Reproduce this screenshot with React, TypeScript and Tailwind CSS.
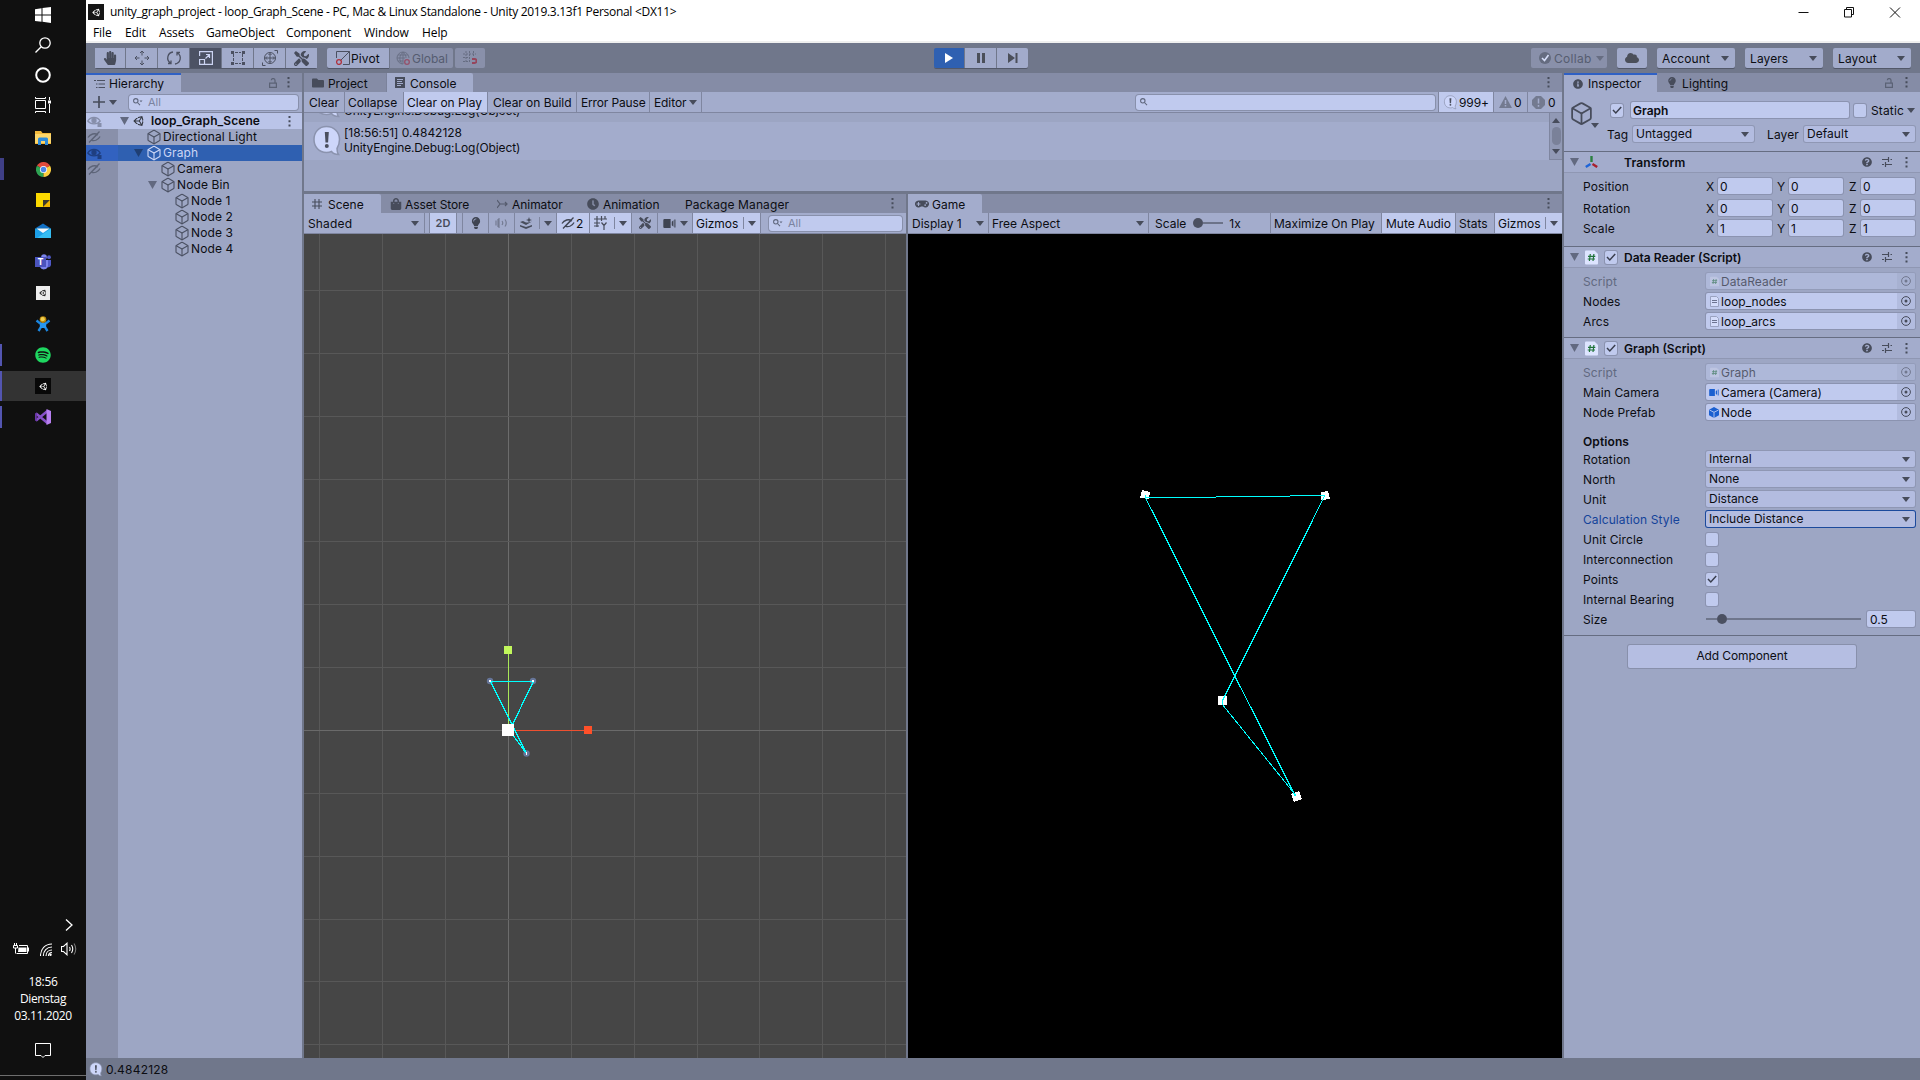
import React from "react";
import {
  FaUnity, FaHandPaper, FaTools, FaCloud, FaLightbulb, FaFolder, FaShoppingBag, FaClock,
  FaGamepad, FaInfoCircle, FaQuestionCircle, FaSpotify,
} from "react-icons/fa";
import { Box } from "lucide-react";

type Kids = { children?: React.ReactNode; className?: string };

/* ---------- small shared glyphs ---------- */
const Down = ({ className = "" }: { className?: string }) => (
  <svg className={`h-[5px] w-[8px] shrink-0 fill-[#474c5b] ${className}`} viewBox="0 0 8 5"><path d="M0 0h8L4 5z" /></svg>
);
const Fold = ({ className = "", color = "fill-[#626980]" }: { className?: string; color?: string }) => (
  <svg className={`h-[8px] w-[9px] shrink-0 ${color} ${className}`} viewBox="0 0 9 8"><path d="M0 0h9L4.500 8z" /></svg>
);
const Dots = ({ className = "" }: { className?: string }) => (
  <svg className={`h-[11px] w-[3px] shrink-0 fill-[#474c5b] ${className}`} viewBox="0 0 3 11"><path d="M.5 0h2v2h-2zM.5 4.300h2v2h-2zM.5 8.600h2v2h-2z" /></svg>
);
const Lock = ({ className = "" }: { className?: string }) => (
  <svg className={`h-[10px] w-[8px] shrink-0 ${className}`} viewBox="0 0 8 10" fill="none" stroke="#5b6275" strokeWidth="1.200">
    <path d="M.6 5.100h6.800v4.300H.6zM6 5V2.500A1.800 1.800 0 0 0 2.300 2.300" />
  </svg>
);
const Search = ({ menu, className = "" }: { menu?: boolean; className?: string }) => (
  <svg className={`h-[8px] w-[10px] shrink-0 ${className}`} viewBox="0 0 10 8" fill="none" stroke="#5f677d" strokeWidth="1.100">
    <circle cx="2.800" cy="2.800" r="2.200" /><path d="M4.500 4.500L7 7.200" />
    {menu && <path d="M6.500 2.500h3L8 4.200z" fill="#5f677d" stroke="none" />}
  </svg>
);
const Check = () => (
  <svg className="h-[10px] w-[10px]" viewBox="0 0 10 10" fill="none" stroke="#3a3f4e" strokeWidth="1.500"><path d="M1 5l2.800 3L9.200 2" /></svg>
);
const Cube = ({ size = "h-[16px] w-[16px]", className = "text-[#4c5264]" }: { size?: string; className?: string }) => <Box className={`${size} shrink-0 ${className}`} strokeWidth={1.7} />;
const Bubble = ({ className = "" }: { className?: string }) => (
  <svg className={`shrink-0 ${className}`} viewBox="0 0 30 32">
    <path d="M14.500 1.500C7 1.500 2 7 2 14.500S7 27.500 14.500 27.500c2 0 3.500-.3 5-1 1.500 2 4 3 7 3-1.500-2-1.500-4-1.500-6 1.500-2.500 2.500-5.500 2.500-9C27.500 7 22 1.500 14.500 1.500z" fill="#cdd6fa" stroke="#8b93ae" strokeWidth="1.500" />
    <path d="M12.800 7h4l-.7 10.500h-2.600z" fill="#4a4f5e" /><circle cx="14.800" cy="21" r="2" fill="#4a4f5e" />
  </svg>
);
const Grid = () => (
  <svg className="h-[10px] w-[10px] shrink-0" viewBox="0 0 10 10" fill="none" stroke="#474c5b" strokeWidth="1.100"><path d="M3 0v10M7 0v10M0 3h10M0 7h10" /></svg>
);
const Camera = ({ size = "h-[8px] w-[11px]", color = "fill-[#3f4452]" }: { size?: string; color?: string }) => (
  <svg className={`shrink-0 ${size} ${color}`} viewBox="0 0 11 8"><path d="M0 1a1 1 0 0 1 1-1h5.500v8H1a1 1 0 0 1-1-1zM7.500 2.500L9 1.200v5.600L7.500 5.500zM9.800.5h1v7h-1z" /></svg>
);
const EyeOff = ({ className = "" }: { className?: string }) => (
  <svg className={`h-[12px] w-[14px] shrink-0 ${className}`} viewBox="0 0 14 12" fill="none" stroke="currentColor" strokeWidth="1.300">
    <path d="M1 6.500C3 3 8 1.500 11 4M13 5.500C11 9.500 7 10.300 4.500 9.200M2 11.500L12.500.5M5.500 8l4-4" />
  </svg>
);
const Eye = ({ className = "" }: { className?: string }) => (
  <svg className={`h-[12px] w-[15px] shrink-0 ${className}`} viewBox="0 0 15 12" fill="none" stroke="currentColor" strokeWidth="1.300">
    <path d="M.8 6C3.500 1.300 10.500 1.300 13.200 6 10.500 9.700 3.500 9.700.8 6z" /><circle cx="7" cy="5.500" r="2" fill="currentColor" /><path d="M10.500 8h4v4h-4z" fill="currentColor" stroke="none" />
  </svg>
);

/* ---------- Windows task bar ---------- */
const TaskItem = ({ children, mark, className = "h-[30px] mb-px" }: Kids & { mark?: string }) => (
  <div className={`flex w-full items-center ${className}`}>
    <div className={`shrink-0 ${mark ?? "w-0"}`} />
    <div className="flex flex-1 justify-center">{children}</div>
    <div className={`shrink-0 ${mark ? (mark.includes("w-[4px]") ? "w-[4px]" : "w-[2px]") : "w-0"}`} />
  </div>
);

const TaskBar = () => (
  <aside className="flex h-full w-[86px] shrink-0 flex-col bg-[#101010] text-white">
    <TaskItem className="h-[30px]">
      <svg className="h-4 w-4 fill-white" viewBox="0 0 16 16"><path d="M0 2.300l6.500-1v6.300H0zM7.500 1.100L16 0v7.600H7.500zM0 8.500h6.500v6.300L0 13.900zM7.500 8.500H16V16l-8.500-1.200z" /></svg>
    </TaskItem>
    <TaskItem className="h-[30px]">
      <svg className="h-4 w-4" viewBox="0 0 16 16" fill="none" stroke="#fff" strokeWidth="1.300"><circle cx="10" cy="6" r="5.200" /><path d="M6.200 9.800L.5 15.500" /></svg>
    </TaskItem>
    <TaskItem className="h-[30px]">
      <svg className="h-4 w-4" viewBox="0 0 16 16" fill="none" stroke="#fff" strokeWidth="2"><circle cx="8" cy="8" r="6.800" /></svg>
    </TaskItem>
    <TaskItem className="h-[30px] mb-[3px]">
      <svg className="h-4 w-4" viewBox="0 0 16 16" fill="none" stroke="#fff"><path d="M.5 3.500h10v8H.5zM.5 0v1.500h10V0M.5 16v-1.500h10V16M14.500 0v3M14.500 7v9" /><path d="M13 3.500h3v3h-3z" fill="#fff" stroke="none" /></svg>
    </TaskItem>
    <TaskItem>
      <svg className="h-4 w-4" viewBox="0 0 16 16"><path d="M0 1h6l1.500 2H16v11H0z" fill="#f2b93c" /><path d="M0 4h16v9H0z" fill="#fcd66b" /><path d="M3 15V9q0-1.500 1.500-1.500h7Q13 7.500 13 9v6h-3v-4H6v4z" fill="#2d8bdc" /></svg>
    </TaskItem>
    <TaskItem mark="h-[22px] w-[4px] bg-[#3f3f86]">
      <svg className="h-[15px] w-[15px]" viewBox="0 0 16 16">
        <path d="M8 8L1.070 4A8 8 0 0 1 14.930 4z" fill="#e04a3c" /><path d="M8 8V16A8 8 0 0 1 1.070 4z" fill="#2ea353" /><path d="M8 8L14.930 4A8 8 0 0 1 8 16z" fill="#fbcf3f" /><circle cx="8" cy="8" r="3.800" fill="#fff" /><circle cx="8" cy="8" r="3" fill="#4b86e8" />
      </svg>
    </TaskItem>
    <TaskItem>
      <svg className="h-[14px] w-[14px]" viewBox="0 0 14 14"><path d="M0 0h14v7l-7 7H0z" fill="#fcd900" /><path d="M7 7h7l-7 7z" fill="#3b3a30" /><path d="M14 7v7H7z" fill="#f0b400" /></svg>
    </TaskItem>
    <TaskItem>
      <svg className="h-4 w-4" viewBox="0 0 16 16"><path d="M0 5.500L8 .5l8 5z" fill="#1270c4" /><path d="M0 5.500h16V15H0z" fill="#1c9fe8" /><path d="M16 5.500V15H2z" fill="#35bdf2" /><path d="M1.500 5.500h13L8 10z" fill="#f4f8fb" /></svg>
    </TaskItem>
    <TaskItem>
      <div className="relative h-4 w-4">
        <svg className="h-4 w-4" viewBox="0 0 16 16"><circle cx="9" cy="3" r="2.800" fill="#7b83eb" /><circle cx="14" cy="3.200" r="1.900" fill="#5059c9" /><path d="M11 6h5v5a3 3 0 0 1-5 1.500z" fill="#5059c9" /><path d="M5 6h8v5.500a4.200 4.200 0 0 1-8 1.500z" fill="#7b83eb" /><path d="M0 3h11v10H0z" fill="#4b53bc" /></svg>
        <span className="absolute left-[2.500px] top-[3px] font-['Inter'] text-[9px] font-bold leading-[10px]">T</span>
      </div>
    </TaskItem>
    <TaskItem><div className="flex h-[14px] w-[14px] items-center justify-center bg-[#ededed]"><FaUnity className="h-[8px] w-[8px] text-[#222]" /></div></TaskItem>
    <TaskItem>
      <svg className="h-4 w-4" viewBox="0 0 16 16"><path d="M1.500 4.500L6 8v3l-2.500 4M14.500 4.500L10 8v3l2.500 4" fill="none" stroke="#1b86e0" strokeWidth="2.400" /><path d="M5 6.500h6V12H5z" fill="#2797f0" /><circle cx="8" cy="3.600" r="3.300" fill="#b8860b" /><circle cx="7.700" cy="3.200" r="2.100" fill="#f0cf50" /></svg>
    </TaskItem>
    <TaskItem mark="h-[22px] w-[2px] bg-[#5355b0]"><FaSpotify className="h-4 w-4 text-[#1ed760]" /></TaskItem>
    <TaskItem className="mb-px h-[30px] bg-[#333]" mark="h-[30px] w-[2px] bg-[#5355b0]"><div className="flex h-4 w-4 items-center justify-center bg-[#080808]"><FaUnity className="h-[9px] w-[9px]" /></div></TaskItem>
    <TaskItem mark="h-[22px] w-[2px] bg-[#5355b0]">
      <svg className="h-4 w-4" viewBox="0 0 16 16"><path d="M1 4.500L12.500 14M1 11.500L12.500 2" stroke="#8650c7" strokeWidth="2.600" fill="none" /><path d="M0 4.500l1.800-.9v8.800L0 11.500z" fill="#6a37a8" /><path d="M11.500 0L16 2v12l-4.500 2z" fill="#b77ff0" /></svg>
    </TaskItem>
    <div className="flex-1" />
    <svg className="ml-[65px] h-[12px] w-[8px]" viewBox="0 0 8 12" fill="none" stroke="#fff" strokeWidth="1.300"><path d="M1 .5l6 5.500-6 5.500" /></svg>
    <div className="mt-[10px] flex h-[16px] items-center">
      <svg className="ml-[13px] h-[12px] w-[16px]" viewBox="0 0 16 12" fill="none" stroke="#fff"><path d="M3.500 10.500h11v-8H6M.5 2.500h4v2.500h-4zM1.500 2.500V0M3.500 2.500V0M2.500 5v5.500M15.500 4.500v4" /><path d="M5.500 4.500h8v4.500H5z" fill="#fff" stroke="none" /></svg>
      <svg className="ml-[11px] h-[13px] w-[12px]" viewBox="0 0 12 13" fill="none" stroke="#fff" strokeWidth="1.100"><path d="M.5 13C.5 6 5 1 12 1M3.300 13c0-5 3.500-9 8.700-9M6 13c0-3.500 2.500-6 6-6M8.500 13c0-2 1.500-3.500 3.500-3.500" /><circle cx="10.500" cy="11.700" r="1.200" fill="#fff" stroke="none" /></svg>
      <svg className="ml-[9px] h-[14px] w-[17px]" viewBox="0 0 17 14" fill="none" stroke="#fff" strokeWidth="1.100"><path d="M.5 4.500h2L6 1.200v11.600L2.500 9.500h-2zM8.500 5q1.200 2 0 4M10.500 3q2.500 4 0 8" /><path d="M13 1.500q3.500 5.500 0 11" stroke="#777" /></svg>
    </div>
    <div className="mt-[16px] text-center font-['Open_Sans'] text-[12px] leading-[17px] tracking-[-0.35px]"><div>18:56</div><div>Dienstag</div><div>03.11.2020</div></div>
    <svg className="mx-auto mt-[19px] h-[16px] w-[16px]" viewBox="0 0 16 16" fill="none" stroke="#fff"><path d="M.5.500h15v12H10l-2 2-2-2H.5z" /></svg>
    <div className="mt-[16px] h-px w-full bg-[#6e6e6e]" />
    <div className="h-[4px]" />
  </aside>
);

/* ---------- title and menu ---------- */
const TitleBar = () => (
  <header className="h-[43px] shrink-0 border-b-2 border-[#efefef] bg-white font-['Open_Sans'] text-[12px] text-black">
    <div className="flex h-[24px] items-center">
      <div className="ml-[2px] flex h-4 w-4 items-center justify-center bg-[#161616]"><FaUnity className="h-[9px] w-[9px] text-white" /></div>
      <span className="ml-[6px] whitespace-pre tracking-[-0.29px]">unity_graph_project - loop_Graph_Scene - PC, Mac &amp; Linux Standalone - Unity 2019.3.13f1 Personal &lt;DX11&gt;</span>
      <svg className="ml-auto mr-[19px] h-[14px] w-[104px]" viewBox="0 0 104 14" fill="none" stroke="#111"><path d="M1.500 7.500h10M47.500 4.500h7V12h-7zM49.500 4.500V2.500h7v7h-2M93 2.500l10 10M103 2.500l-10 10" /></svg>
    </div>
    <nav className="flex h-[17px] items-center leading-[17px] tracking-[-0.1px]">
      <span className="ml-[7px] w-[32px]">File</span><span className="w-[34px]">Edit</span><span className="w-[47px]">Assets</span><span className="w-[80px]">GameObject</span><span className="w-[78px]">Component</span><span className="w-[58px]">Window</span><span>Help</span>
    </nav>
  </header>
);

/* ---------- main toolbar ---------- */
const Tool = ({ children, size = "w-[31px] mr-px", className = "bg-[#a2abcb]" }: Kids & { size?: string }) => (
  <div className={`flex h-[20px] items-center justify-center ${size} ${className}`}>{children}</div>
);
const TopDrop = ({ children, gap = "mr-[10px]" }: Kids & { gap?: string }) => (
  <div className={`flex h-[20px] w-[78px] items-center justify-between rounded-[2px] bg-[#a2abcb] pl-[5px] pr-[6px] shadow-[0_1px_0_#525869] ${gap}`}><span className="pt-px tracking-[0.1px]">{children}</span><Down /></div>
);
const ico = "h-[16px] w-[16px] fill-none stroke-[#4b5061]";
const MainBar = () => (
  <div className="flex h-[30px] shrink-0 items-center bg-[#70778b]">
    <div className="ml-[9px] flex rounded-[2px] shadow-[0_1px_0_#525869]">
      <Tool size="w-[30px] mr-px"><FaHandPaper className="h-[14px] w-[14px] text-[#474c5b]" /></Tool>
      <Tool><svg className={ico} viewBox="0 0 16 16"><path d="M8 1v4.500M8 10.500V15M1 8h4.500M10.500 8H15M6 3l2-2 2 2M6 13l2 2 2-2M3 6L1 8l2 2M13 6l2 2-2 2" /></svg></Tool>
      <Tool><svg className={ico} viewBox="0 0 16 16" strokeWidth="1.300"><path d="M7 2A6 6 0 0 0 4.500 13M2 13.500h3v-3M9 14A6 6 0 0 0 11.500 3M14 2.500h-3v3" /></svg></Tool>
      <Tool className="bg-[#4c5264]"><svg className="h-[14px] w-[14px] fill-none stroke-[#ccd4f2]" viewBox="0 0 14 14" strokeWidth="1.200"><path d="M.6 5V.6h12.800v12.800H6M.6 8.500h4.900v4.900H.6zM6.500 7.500L10 4M7 3.500h3.500V7" /></svg></Tool>
      <Tool><svg className={ico} viewBox="0 0 16 16"><path d="M3.500 4v8M12.500 4v8M5 2.500h6M5 13.500h6" strokeDasharray="3 1" /><path d="M1 1h3v3H1zM12 1h3v3h-3zM1 12h3v3H1zM12 12h3v3h-3z" className="fill-[#4b5061] stroke-none" /></svg></Tool>
      <Tool><svg className={ico} viewBox="0 0 16 16"><circle cx="8" cy="8" r="5.500" /><path d="M8 3.500v9M3.500 8h9M6.500 5L8 3.500 9.500 5M6.500 11L8 12.500 9.500 11M5 6.500L3.500 8 5 9.500M11 6.500L12.500 8 11 9.500M12.500.5h3v3M.5 12.500v3h3" /></svg></Tool>
      <Tool size="w-[31px]"><FaTools className="h-[15px] w-[15px] text-[#474c5b]" /></Tool>
    </div>
    <div className="ml-[10px] flex h-[20px] w-[62px] items-center rounded-l-[2px] bg-[#a2abcb] shadow-[0_1px_0_#525869]">
      <svg className="ml-[9px] h-[14px] w-[14px] fill-none" viewBox="0 0 14 14"><path d="M.5 7V.5h13v13H7M4.500 9.500L13.500.5" stroke="#4b5061" /><circle cx="3" cy="11" r="2.400" stroke="#b0303c" strokeWidth="1.300" /></svg>
      <span className="ml-px pt-px tracking-[0.1px]">Pivot</span>
    </div>
    <div className="ml-px flex h-[20px] w-[63px] items-center rounded-r-[2px] bg-[#8990aa] text-[#555c70]">
      <svg className="ml-[6px] h-[14px] w-[14px] fill-none" viewBox="0 0 14 14"><path d="M7 13A6 6 0 1 1 13 7M1 7h8M7 1v12M7 1C3 5 3 9 6 13M7 1c2 2 3 4 3 6M2 4h10M2 10h5" stroke="#6a7186" /><circle cx="11" cy="11" r="2.300" stroke="#96516a" strokeWidth="1.300" /></svg>
      <span className="ml-[2px] pt-px tracking-[-0.05px]">Global</span>
    </div>
    <div className="ml-[2px] flex h-[20px] w-[30px] items-center justify-center rounded-[2px] bg-[#8990aa]">
      <svg className="h-[14px] w-[14px] fill-none" viewBox="0 0 14 14"><path d="M3 0v12M6.500 0v12M10.500 0v5M0 3h13M0 6.500h7M0 10.500h7" stroke="#666d82" strokeDasharray="2 1" /><path d="M9 8h2.500a2 2 0 0 1 0 4H9" stroke="#96455c" strokeWidth="1.800" /></svg>
    </div>
    <div className="ml-[449px] flex h-[20px] items-center rounded-[2px] shadow-[0_1px_0_#525869]">
      <Tool size="w-[30px] mr-px" className="rounded-l-[2px] bg-[#2f60b1]"><svg className="h-[10px] w-[8px] fill-white" viewBox="0 0 8 10"><path d="M0 0l8 5-8 5z" /></svg></Tool>
      <Tool><svg className="h-[10px] w-[8px] fill-[#4b4f5a]" viewBox="0 0 8 10"><path d="M0 0h3v10H0zM5 0h3v10H5z" /></svg></Tool>
      <Tool size="w-[31px]" className="rounded-r-[2px] bg-[#a2abcb]"><svg className="h-[10px] w-[10px] fill-[#4b4f5a]" viewBox="0 0 10 10"><path d="M0 0l7 5-7 5zM7.500 0h2v10h-2z" /></svg></Tool>
    </div>
    <div className="flex-1" />
    <div className="mr-[10px] flex h-[20px] w-[76px] items-center rounded-[2px] bg-[#8990aa] pl-[8px] text-[#565d70]">
      <svg className="h-[12px] w-[12px]" viewBox="0 0 12 12"><circle cx="6" cy="6" r="6" fill="#656c80" /><path d="M3 6l2.500 2.500L9.500 3" fill="none" stroke="#d6def8" strokeWidth="1.600" /></svg>
      <span className="ml-[3px] pt-px tracking-[0.3px]">Collab</span><Down className="ml-[4px] opacity-50" />
    </div>
    <div className="mr-[10px] flex h-[20px] w-[30px] items-center justify-center rounded-[2px] bg-[#a2abcb] shadow-[0_1px_0_#525869]"><FaCloud className="h-[14px] w-[14px] text-[#4b4f5a]" /></div>
    <TopDrop>Account</TopDrop><TopDrop>Layers</TopDrop><TopDrop gap="mr-[9px]">Layout</TopDrop>
  </div>
);

/* ---------- hierarchy ---------- */
const rows = [
  { name: "Directional Light", pad: "pl-[28px]", off: true },
  { name: "Graph", pad: "pl-[16px]", open: true, sel: true },
  { name: "Camera", pad: "pl-[42px]", off: true },
  { name: "Node Bin", pad: "pl-[30px]", open: true },
  { name: "Node 1", pad: "pl-[56px]" }, { name: "Node 2", pad: "pl-[56px]" }, { name: "Node 3", pad: "pl-[56px]" }, { name: "Node 4", pad: "pl-[56px]" },
];
const Hierarchy = () => (
  <section className="flex w-[216px] shrink-0 flex-col bg-[#9da6c4]">
    <div className="flex h-[19px] items-center bg-[#858ca6]">
      <div className="flex h-full w-[95px] items-center border-t-2 border-[#2f60c4] bg-[#a3accc]">
        <svg className="ml-[8px] h-[10px] w-[11px] fill-none stroke-[#4b5061]" viewBox="0 0 11 10"><path d="M0 1.500h2M3 1.500h8M2 5h1.500M4.500 5H11M2 8.500h1.500M4.500 8.500H11" /></svg>
        <span className="ml-[4px] tracking-[0.02px]">Hierarchy</span>
      </div>
      <Lock className="ml-[88px]" /><Dots className="ml-[10px]" />
    </div>
    <div className="flex h-[21px] items-center border-b border-[#7f86a0] bg-[#a3accc]">
      <svg className="ml-[7px] h-[12px] w-[12px] stroke-[#474c5b]" viewBox="0 0 12 12" strokeWidth="1.700"><path d="M6 0v12M0 6h12" /></svg>
      <Down className="ml-[4px]" />
      <div className="ml-[12px] flex h-[15px] w-[169px] items-center rounded-[3px] bg-[#c0caee] shadow-[0_0_0_1px_#8890ab]"><Search menu className="ml-[4px]" /><span className="ml-[5px] text-[11px] text-[#7b83a0]">All</span></div>
    </div>
    <div className="flex h-[16px] shrink-0 items-center bg-[#bac4e8] font-semibold">
      <Eye className="ml-px text-[#868eaa]" /><Fold className="ml-[18px]" /><FaUnity className="ml-[4px] h-[12px] w-[12px] text-[#33363f]" />
      <span className="ml-[6px] tracking-[0.08px]">loop_Graph_Scene</span><Dots className="ml-auto mr-[11px]" />
    </div>
    {rows.map((r) => (
      <div key={r.name} className={`flex h-[16px] shrink-0 items-center ${r.sel ? "bg-[#2f60b1] text-[#ccd6f5]" : ""}`}>
        <div className={`flex h-full w-[32px] items-center ${r.sel ? "bg-[#3262c0]" : "bg-[#8990aa]"}`}>
          {r.off && <EyeOff className="ml-px text-[#5d6478]" />}{r.sel && <Eye className="ml-px text-[#1f3f80]" />}
        </div>
        <div className={`flex items-center ${r.pad}`}>
          {r.open && <Fold className="mr-[3px]" color={r.sel ? "fill-[#1f3f74]" : "fill-[#626980]"} />}
          <Cube className={r.sel ? "text-[#ccd6f5]" : "text-[#4c5264]"} /><span className="ml-px whitespace-nowrap tracking-[0.12px]">{r.name}</span>
        </div>
      </div>
    ))}
    <div className="w-[32px] flex-1 bg-[#8990aa]" />
  </section>
);

/* ---------- centre panels ---------- */
const Bar = ({ children }: Kids) => <div className="flex h-[21px] shrink-0 items-stretch border-b border-[#7f86a0] bg-[#a3accc]">{children}</div>;
const Seg = ({ children, className = "" }: Kids) => <div className={`flex shrink-0 items-center whitespace-nowrap border-r border-[#7f86a0] ${className}`}>{children}</div>;
const Tabs = ({ children }: Kids) => <div className="flex h-[19px] shrink-0 items-center bg-[#858ca6]">{children}</div>;
const Split = () => <div className="ml-auto mr-[4px] h-[12px] w-px bg-[#7f86a0]" />;
/* Label whose baseline sits one pixel below the optical centre of its bar. */
const L = ({ children, className = "" }: Kids) => <span className={`shrink-0 pt-[2px] leading-[18px] ${className}`}>{children}</span>;

const Console = () => (
  <section className="flex h-[118px] shrink-0 flex-col bg-[#9ca5c3]">
    <Tabs>
      <div className="flex h-full w-[83px] items-center border-r border-[#7b829b]"><FaFolder className="ml-[8px] h-[12px] w-[12px] text-[#474c5b]" /><L className="ml-[4px] tracking-[-0.05px]">Project</L></div>
      <div className="flex h-full w-[86px] items-center rounded-tr-[2px] bg-[#a3accc]">
        <svg className="ml-[8px] h-[11px] w-[10px]" viewBox="0 0 10 11"><path d="M0 0h10v11H0z" fill="#474c5b" /><path d="M2 2.500h6M2 4.500h5M2 6.500h6M2 8.500h4" stroke="#a3accc" /></svg><L className="ml-[5px]">Console</L>
      </div>
      <Dots className="ml-auto mr-[12px]" />
    </Tabs>
    <Bar>
      <Seg className="w-[41px] pl-[5px]"><L>Clear</L></Seg><Seg className="w-[59px] pl-[3px]"><L>Collapse</L></Seg><Seg className="w-[84px] bg-[#c0caee] pl-[3px]"><L>Clear on Play</L></Seg>
      <Seg className="w-[89px] pl-[5px]"><L className="tracking-[-0.05px]">Clear on Build</L></Seg><Seg className="w-[73px] pl-[4px]"><L className="tracking-[-0.15px]">Error Pause</L></Seg><Seg className="w-[52px] pl-[4px]"><L className="tracking-[-0.1px]">Editor</L><Down className="ml-[3px]" /></Seg>
      <div className="ml-auto flex items-center border-r border-[#7f86a0] pr-[3px]"><div className="flex h-[15px] w-[299px] items-center rounded-[3px] bg-[#c0caee] shadow-[0_0_0_1px_#8890ab]"><Search className="ml-[4px]" /></div></div>
      <Seg className="w-[55px] bg-[#c0caee]"><Bubble className="ml-[4px] h-[15px] w-[15px]" /><L className="ml-px tracking-[-0.1px]">999+</L></Seg>
      <Seg className="w-[34px]"><svg className="ml-[5px] h-[12px] w-[13px]" viewBox="0 0 13 12"><path d="M6.500 0L13 12H0z" fill="#737a90" /><path d="M6.500 4v4M6.500 9v1.500" stroke="#a3accc" strokeWidth="1.500" /></svg><L className="ml-[2px]">0</L></Seg>
      <div className="flex w-[34px] items-center"><svg className="ml-[4px] h-[13px] w-[13px]" viewBox="0 0 13 13"><path d="M4 0h5l4 4v5l-4 4H4L0 9V4z" fill="#737a90" /><path d="M6.500 2.500v5M6.500 9v1.700" stroke="#a3accc" strokeWidth="1.500" /></svg><L className="ml-[3px]">0</L></div>
    </Bar>
    <div className="flex h-[47px] shrink-0">
      <div className="flex flex-1 flex-col overflow-hidden">
        <div className="flex h-[9px] items-end overflow-hidden"><Bubble className="mb-[3px] ml-[8px] h-[32px] w-[30px]" /><span className="mb-[5px] ml-[2px] shrink-0 leading-[12px] tracking-[-0.14px]">UnityEngine.Debug:Log(Object)</span></div>
        <div className="flex h-[38px] items-center bg-[#a3accc]"><Bubble className="ml-[8px] h-[32px] w-[30px]" /><div className="ml-[2px] pb-[2px] leading-[15px] tracking-[-0.14px]"><div className="tracking-[-0.05px]">[18:56:51] 0.4842128</div><div>UnityEngine.Debug:Log(Object)</div></div></div>
      </div>
      <div className="flex w-[13px] flex-col items-center justify-between border-b border-l border-[#7f86a0] bg-[#9199b5] py-[5px]"><Down className="rotate-180" /><div className="h-[18px] w-[9px] rounded-full bg-[#7a8199]" /><Down /></div>
    </div>
  </section>
);

const vLines = [319, 382, 445, 508, 571, 634, 697, 759, 822, 885];
const hLines = [290, 353, 416, 479, 541, 604, 667, 730, 793, 856, 919, 981, 1044];

const SceneView = () => (
  <section className="flex w-[602px] shrink-0 flex-col">
    <Tabs>
      <div className="flex h-full w-[77px] items-center rounded-tr-[2px] bg-[#a3accc]"><div className="ml-[8px]"><Grid /></div><L className="ml-[6px]">Scene</L></div>
      <FaShoppingBag className="ml-[9px] h-[12px] w-[12px] text-[#474c5b]" /><L className="ml-[3px] w-[92px] tracking-[-0.1px]">Asset Store</L>
      <svg className="h-[10px] w-[11px] fill-none stroke-[#555b6d]" viewBox="0 0 11 10" strokeWidth="1.200"><path d="M0 1l3 4-3 4M3 5h7M8 3l2 2-2 2" /></svg><L className="ml-[4px] w-[75px] tracking-[-0.05px]">Animator</L>
      <FaClock className="h-[12px] w-[12px] text-[#474c5b]" /><L className="ml-[4px] w-[82px]">Animation</L>
      <L className="tracking-[0.1px]">Package Manager</L><Dots className="ml-auto mr-[12px]" />
    </Tabs>
    <Bar>
      <Seg className="w-[121px] justify-between pl-[4px] pr-[5px]"><L className="tracking-[0.15px]">Shaded</L><Down /></Seg>
      <Seg className="w-[5px]" />
      <Seg className="w-[27px] justify-center bg-[#c0caee] text-[11px] font-semibold text-[#474c5b]"><span className="pt-px">2D</span></Seg>
      <Seg className="w-[6px]" />
      <Seg className="w-[26px] justify-center"><FaLightbulb className="h-[12px] w-[10px] text-[#3f4452]" /></Seg>
      <Seg className="w-[26px] justify-center"><svg className="h-[10px] w-[13px] fill-none stroke-[#747b92]" viewBox="0 0 13 10" strokeWidth="1.200"><path d="M1 2.500v5M4 0v10M3 1v8" /><path d="M7 3q1.500 2 0 4M10 1.500q2.500 3.500 0 7" /></svg></Seg>
      <Seg className="w-[42px] pl-[5px] pr-[4px]"><svg className="h-[12px] w-[13px] fill-[#474c5b]" viewBox="0 0 13 12"><path d="M0 5l3-1 3 1.500h3l3-1L6 8zM0 8l6 2 6-2v1.500L6 12 0 9.500zM9 0l.8 2.200L12 3l-2.200.8L9 6l-.8-2.200L6 3l2.200-.8z" /></svg><Split /><Down /></Seg>
      <Seg className="w-[33px] bg-[#c0caee] pl-[4px]"><EyeOff className="text-[#3f4452]" /><L className="ml-px">2</L></Seg>
      <Seg className="w-[42px] bg-[#c0caee] pl-[4px] pr-[4px]"><svg className="h-[14px] w-[13px] fill-none stroke-[#474c5b]" viewBox="0 0 13 14" strokeWidth="1.200"><path d="M3 0v11M7.500 0v5M11 0v3M0 3h13M0 7h6M0 10h5M7.500 6.500L10 9.500l2.500-3M10 9.500V14" /></svg><Split /><Down /></Seg>
      <Seg className="w-[26px] justify-center"><FaTools className="h-[12px] w-[12px] text-[#474c5b]" /></Seg>
      <Seg className="w-[35px] pl-[5px] pr-[4px]"><Camera size="h-[9px] w-[13px]" /><Down className="ml-auto" /></Seg>
      <Seg className="w-[68px] bg-[#c0caee] pl-[3px] pr-[4px]"><L className="tracking-[-0.05px]">Gizmos</L><Split /><Down /></Seg>
      <div className="flex items-center"><div className="ml-[8px] flex h-[15px] w-[133px] items-center rounded-[3px] bg-[#c0caee] shadow-[0_0_0_1px_#8890ab]"><Search menu className="ml-[4px]" /><span className="ml-[5px] text-[11px] text-[#7b83a0]">All</span></div></div>
    </Bar>
    <svg className="h-[824px] w-[602px] bg-[#464646]" viewBox="304 234 602 824" shapeRendering="crispEdges" fill="none">
      {vLines.map((x) => <path key={x} d={`M${x + 0.5} 234V1058`} stroke={x === 508 ? "#6c6c6c" : "#585858"} />)}
      {hLines.map((y) => <path key={y} d={`M304 ${y + 0.5}H906`} stroke={y === 730 ? "#6a6a6a" : "#585858"} />)}
      <path d="M508.500 654V724" stroke="#a9e858" /><path d="M514 730.500H584" stroke="#ee5030" />
      <g shapeRendering="auto" fill="#8fb0ff" opacity=".45"><circle cx="490" cy="681" r="3.200" /><circle cx="533" cy="681" r="3.200" /><circle cx="526.500" cy="753.500" r="3.200" /></g>
      <path d="M490 681.500H533.500" stroke="#00ffff" />
      <path d="M490.500 681.500L526.500 753.500M533.500 681.500L509.500 730.500L526.500 753.500" stroke="#00ffff" strokeWidth="1.300" />
      <path d="M489 680h2v2h-2zM532 680h2v2h-2zM526 752h1v3h-1z" fill="#fff" />
      <path d="M504 646h8v8h-8z" fill="#c2f75c" /><path d="M584 726h8v8h-8z" fill="#ff5029" /><path d="M502 724h12v12h-12z" fill="#fff" />
    </svg>
  </section>
);

const GameView = () => (
  <section className="flex min-w-0 flex-1 flex-col">
    <Tabs>
      <div className="flex h-full w-[74px] items-center rounded-tr-[2px] bg-[#a3accc]"><FaGamepad className="ml-[7px] h-[14px] w-[14px] text-[#474c5b]" /><L className="ml-[3px]">Game</L></div>
      <Dots className="ml-auto mr-[12px]" />
    </Tabs>
    <Bar>
      <Seg className="w-[81px] justify-between pl-[4px] pr-[4px]"><L>Display 1</L><Down /></Seg>
      <Seg className="w-[160px] justify-between pl-[3px] pr-[4px]"><L>Free Aspect</L><Down /></Seg>
      <Seg className="w-[122px] pl-[6px]"><L>Scale</L><div className="ml-[7px] h-[10px] w-[10px] rounded-full bg-[#4b5061]" /><div className="h-[2px] w-[20px] bg-[#6c7389]" /><L className="ml-[6px]">1x</L></Seg>
      <Seg className="w-[111px] pl-[3px]"><L>Maximize On Play</L></Seg><Seg className="w-[74px] bg-[#c0caee] pl-[4px]"><L>Mute Audio</L></Seg><Seg className="w-[39px] pl-[3px]"><L>Stats</L></Seg>
      <div className="flex flex-1 items-center bg-[#c0caee] pl-[3px] pr-[4px]"><L>Gizmos</L><Split /><Down /></div>
    </Bar>
    <svg className="h-[824px] w-[654px] bg-black" viewBox="908 234 654 824" shapeRendering="crispEdges" fill="none">
      <g fill="#fff"><path d="M1142 490l8 2-1 7-9-1z" /><path d="M1321 492l7-1 2 8-9 1z" /><path d="M1218 696h9v9h-9z" /><path d="M1291 794l8-3 3 8-8 3z" /></g>
      <path d="M1145 497.500h71M1216 496.500h74M1290 495.500h35" stroke="#00ffff" />
      <path d="M1145.500 495v3L1295.500 796.500M1324.500 496L1222 701.500" stroke="#00ffff" strokeWidth="1.300" />
      <path d="M1222 701.500v2.500L1295.500 795" stroke="#00ffff" />
    </svg>
  </section>
);

/* ---------- inspector ---------- */
const fieldBox = "flex h-[16px] items-center rounded-[2px] bg-[#c0caee] shadow-[0_0_0_1px_#8b93b0]";
const Tick = ({ on, className = "" }: { on?: boolean; className?: string }) => (
  <div className={`flex h-[13px] w-[12px] shrink-0 items-center justify-center rounded-[2px] bg-[#c0caee] shadow-[0_0_0_1px_#8b93b0] ${className}`}>{on && <Check />}</div>
);
const Hash = ({ className = "" }: { className?: string }) => (
  <svg className={`shrink-0 ${className}`} viewBox="0 0 13 14"><path d="M0 1q0-1 1-1h8.500L13 3.500V13q0 1-1 1H1q-1 0-1-1z" fill="#dde4ff" /><path d="M5.300 3.500l-.9 7M8.900 3.500l-.9 7M3 5.800h7.300M2.700 8.500H10" stroke="#20733a" strokeWidth="1.200" fill="none" /></svg>
);
const HeaderEnd = () => (
  <div className="ml-auto flex items-center"><FaQuestionCircle className="h-[10px] w-[10px] text-[#474c5b]" />
    <svg className="ml-[10px] h-[10px] w-[10px] fill-none stroke-[#474c5b]" viewBox="0 0 10 10" strokeWidth="1.200"><path d="M0 2.500h6M8.500 2.500H10M6.500 0v5M0 7.500h2M4 7.500h6M3.500 5v5" /></svg>
    <Dots className="ml-[13px] mr-[12px]" /></div>
);
const ScriptHead = ({ title }: { title: string }) => (
  <div className="flex h-[21px] items-center border-b border-[#8f97b3] bg-[#a3accc]"><Fold className="ml-[6px]" /><Hash className="ml-[6px] h-[15px] w-[13px]" /><Tick on className="ml-[7px]" /><L className="ml-[7px] font-semibold">{title}</L><HeaderEnd /></div>
);
const Row = ({ label, children, className = "", labelClass = "" }: Kids & { label: string; labelClass?: string }) => (
  <div className={`flex h-[16px] items-center pl-[19px] pr-[5px] ${className}`}><L className={`w-[123px] tracking-[0.1px] ${labelClass}`}>{label}</L>{children}</div>
);
const Vec = ({ label, v, className }: { label: string; v: string; className?: string }) => (
  <Row label={label} className={className}>
    <L className="w-[12px]">X</L><div className={`${fieldBox} w-[54px] pl-[2px]`}><L>{v}</L></div>
    <L className="ml-[5px] w-[12px]">Y</L><div className={`${fieldBox} w-[54px] pl-[2px]`}><L>{v}</L></div>
    <L className="ml-[6px] w-[12px]">Z</L><div className={`${fieldBox} w-[54px] pl-[2px]`}><L>{v}</L></div>
  </Row>
);
const Obj = ({ label, v, icon, dim, className }: { label: string; v: string; icon: React.ReactNode; dim?: boolean; className?: string }) => (
  <Row label={label} className={className} labelClass={dim ? "text-[#616980]" : ""}>
    <div className={`${fieldBox} flex-1 ${dim ? "opacity-50" : ""}`}>
      <div className="ml-[3px] flex w-[10px] justify-center">{icon}</div><L className="ml-[2px] tracking-[0.02px]">{v}</L>
      <div className="ml-auto flex h-full w-[18px] items-center justify-center rounded-r-[2px] bg-[#b2bcdf]"><svg className="h-[10px] w-[10px]" viewBox="0 0 10 10"><circle cx="5" cy="5" r="4.400" fill="none" stroke="#474c5b" /><circle cx="5" cy="5" r="1.500" fill="#474c5b" /></svg></div>
    </div>
  </Row>
);
const dropBox = "flex h-[16px] items-center justify-between rounded-[2px] bg-[#b3bce0] pl-[3px] pr-[5px]";
const Drop = ({ label, v, focus, className = "mt-[4px]" }: { label: string; v: string; focus?: boolean; className?: string }) => (
  <Row label={label} className={className} labelClass={focus ? "text-[#14439a]" : ""}>
    <div className={`${dropBox} flex-1 ${focus ? "shadow-[0_0_0_1px_#1c4a9c]" : "shadow-[0_0_0_1px_#8f97b4]"}`}><span>{v}</span><Down /></div>
  </Row>
);
const TextAsset = () => <svg className="h-[11px] w-[9px]" viewBox="0 0 9 11"><path d="M.5.500h6l2 2v8h-8z" fill="#d4dcfa" stroke="#9aa2c0" /><path d="M2 4.500h5M2 6.500h5" stroke="#6c7390" /></svg>;

const Inspector = () => (
  <section className="flex w-[356px] shrink-0 flex-col bg-[#9da6c4]">
    <Tabs>
      <div className="flex h-full w-[93px] items-center border-t-2 border-[#2f60c4] bg-[#a3accc]"><FaInfoCircle className="ml-[9px] h-[10px] w-[10px] text-[#474c5b]" /><span className="ml-[5px]">Inspector</span></div>
      <FaLightbulb className="ml-[10px] h-[11px] w-[10px] text-[#474c5b]" /><L className="ml-[5px] tracking-[0.1px]">Lighting</L>
      <Lock className="ml-auto" /><Dots className="ml-[12px] mr-[12px]" />
    </Tabs>
    <div className="flex h-[60px] shrink-0 border-b border-[#666d82] bg-[#a3accc]">
      <div className="flex w-[40px] items-start pt-[9px]"><Cube size="h-[25px] w-[25px]" className="ml-[5px] text-[#474c5b]" /><Down className="-ml-[3px] mt-[22px]" /></div>
      <div className="flex-1">
        <div className="mt-[10px] flex h-[16px] items-center"><Tick on className="ml-[7px]" /><div className="ml-[8px] flex h-[16px] w-[218px] items-center rounded-[2px] bg-[#c0caee] pl-[2px] font-semibold shadow-[0_0_0_1px_#8b93b0]"><L>Graph</L></div><Tick className="ml-[5px]" /><L className="ml-[5px] tracking-[0.15px]">Static</L><Down className="ml-[3px]" /></div>
        <div className="mt-[8px] flex h-[16px] items-center"><L className="ml-[3px] w-[26px] tracking-[0.1px]">Tag</L>
          <div className={`${dropBox} w-[121px] shadow-[0_0_0_1px_#8f97b4]`}><span className="tracking-[0.05px]">Untagged</span><Down /></div>
          <L className="ml-[13px] w-[37px] tracking-[0.1px]">Layer</L>
          <div className={`${dropBox} mr-[5px] flex-1 shadow-[0_0_0_1px_#8f97b4]`}><span className="tracking-[0.05px]">Default</span><Down /></div></div>
      </div>
    </div>
    <div className="h-[95px] shrink-0 border-b border-[#666d82]">
      <div className="flex h-[21px] items-center border-b border-[#8f97b3] bg-[#a3accc]"><Fold className="ml-[6px]" />
        <svg className="ml-[6px] h-[12px] w-[13px] fill-none" viewBox="0 0 13 12" strokeWidth="2.400"><path d="M6.500 0v6" stroke="#2b8040" /><path d="M5.500 8L.8 11" stroke="#1e64d8" /><path d="M7.500 8l4.700 3" stroke="#a8202c" /></svg>
        <L className="ml-[26px] font-semibold tracking-[0.15px]">Transform</L><HeaderEnd /></div>
      <Vec label="Position" v="0" className="mt-[5px]" /><Vec label="Rotation" v="0" className="mt-[6px]" /><Vec label="Scale" v="1" className="mt-[4px]" />
    </div>
    <div className="h-[91px] shrink-0 border-b border-[#666d82]">
      <ScriptHead title="Data Reader (Script)" />
      <Obj dim label="Script" v="DataReader" icon={<Hash className="h-[11px] w-[9px]" />} className="mt-[5px]" />
      <Obj label="Nodes" v="loop_nodes" icon={<TextAsset />} className="mt-[4px]" />
      <Obj label="Arcs" v="loop_arcs" icon={<TextAsset />} className="mt-[4px]" />
    </div>
    <div className="h-[298px] shrink-0 border-b border-[#666d82]">
      <ScriptHead title="Graph (Script)" />
      <Obj dim label="Script" v="Graph" icon={<Hash className="h-[11px] w-[9px]" />} className="mt-[5px]" />
      <Obj label="Main Camera" v="Camera (Camera)" icon={<Camera size="h-[7px] w-[10px]" color="fill-[#1a5fd0]" />} className="mt-[4px]" />
      <Obj label="Node Prefab" v="Node" icon={<svg className="h-[11px] w-[10px]" viewBox="0 0 10 11"><path d="M5 0l5 2.700v5.600L5 11 0 8.300V2.700z" fill="#1a5fd0" /><path d="M.5 3L5 5.300 9.500 3M5 5.300V11" stroke="#b9c8f0" fill="none" strokeWidth=".9" /></svg>} className="mt-[4px]" />
      <Row label="Options" className="mt-[13px] font-semibold" />
      <Drop label="Rotation" v="Internal" className="mt-[2px]" /><Drop label="North" v="None" /><Drop label="Unit" v="Distance" /><Drop label="Calculation Style" v="Include Distance" focus />
      <Row label="Unit Circle" className="mt-[4px]"><Tick /></Row><Row label="Interconnection" className="mt-[4px]"><Tick /></Row><Row label="Points" className="mt-[4px]"><Tick on /></Row><Row label="Internal Bearing" className="mt-[4px]"><Tick /></Row>
      <Row label="Size" className="mt-[4px]"><div className="h-[2px] w-[11px] bg-[#6f768c]" /><div className="h-[10px] w-[10px] rounded-full bg-[#4b5061]" /><div className="h-[2px] w-[134px] bg-[#6f768c]" /><div className={`${fieldBox} ml-auto w-[48px] pl-[3px]`}><L>0.5</L></div></Row>
    </div>
    <div className="ml-[64px] mt-[9px] flex h-[23px] w-[228px] shrink-0 items-center justify-center rounded-[2px] bg-[#b5bee2] pb-[2px] tracking-[-0.1px] shadow-[0_0_0_1px_#8890ab]">Add Component</div>
  </section>
);

export default function App() {
  return (
    <div className="flex h-[1080px] w-[1920px] overflow-hidden bg-[#70778b] font-['Inter'] text-[12px] text-[#0c0d12]">
      <TaskBar />
      <main className="flex min-w-0 flex-1 flex-col">
        <TitleBar />
        <MainBar />
        <div className="flex h-[985px] shrink-0">
          <Hierarchy />
          <div className="ml-[2px] mr-[2px] flex w-[1258px] shrink-0 flex-col">
            <Console />
            <div className="mt-[3px] flex flex-1 gap-[2px]"><SceneView /><GameView /></div>
          </div>
          <Inspector />
        </div>
        <footer className="flex h-[22px] items-center pl-[3px]"><Bubble className="h-[15px] w-[14px]" /><L className="ml-[3px] tracking-[0.2px]">0.4842128</L></footer>
      </main>
    </div>
  );
}
